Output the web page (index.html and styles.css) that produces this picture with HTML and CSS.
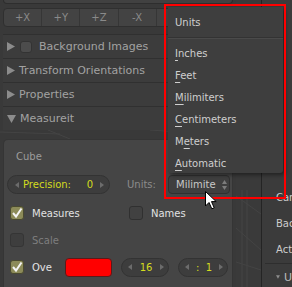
FILE: index.html
```html
<!DOCTYPE html>
<html>
<head>
<meta charset="utf-8">
<title>Measureit</title>
<link rel="stylesheet" href="styles.css">
</head>
<body>
<div class="screen">

  <!-- tool shelf -->
  <div class="shelf">
    <div class="stub"></div>
    <div class="axes">
      <span>+X</span><span>+Y</span><span>+Z</span><span>-X</span><span></span><span></span>
    </div>

    <div class="hdr first">
      <svg class="tri" width="8" height="9" viewBox="0 0 8 9"><polygon points="0,0 8,4.5 0,9"/></svg>
      <span class="chk"></span>
      <span>Background Images</span>
    </div>
    <div class="hdr">
      <svg class="tri" width="8" height="9" viewBox="0 0 8 9"><polygon points="0,0 8,4.5 0,9"/></svg>
      <span>Transform Orientations</span>
    </div>
    <div class="hdr">
      <svg class="tri" width="8" height="9" viewBox="0 0 8 9"><polygon points="0,0 8,4.5 0,9"/></svg>
      <span>Properties</span>
    </div>
    <div class="hdr">
      <svg class="tri" width="9" height="8" viewBox="0 0 9 8"><polygon points="0,0 9,0 4.5,8"/></svg>
      <span>Measureit</span>
    </div>

    <div class="gap">
      <svg width="236" height="9" viewBox="0 0 236 9">
        <line x1="0" y1="2" x2="60" y2="4" />
        <line x1="48" y1="0" x2="70" y2="9" />
        <line x1="150" y1="0" x2="236" y2="6" />
      </svg>
    </div>

    <div class="box">
      <div class="obj">Cube</div>

      <div class="line">
        <div class="num prec">
          <svg class="arr" width="4" height="6" viewBox="0 0 4 6"><polygon points="4,0 0,3 4,6"/></svg>
          <span class="lbl">Precision:</span>
          <span class="val">0</span>
          <svg class="arr" width="4" height="6" viewBox="0 0 4 6"><polygon points="0,0 4,3 0,6"/></svg>
        </div>
        <span class="units">Units:</span>
        <div class="drop">
          <span class="dtext">Milimite</span>
          <svg width="5" height="10" viewBox="0 0 5 10"><polygon points="0,4 2.5,0 5,4"/><polygon points="0,6 5,6 2.5,10"/></svg>
        </div>
      </div>

      <div class="opt top">
        <div class="col">
          <span class="chk on"><svg width="14" height="14" viewBox="0 0 14 14"><polyline points="3,7 6,10.5 11.5,2.5"/></svg></span>
          <span class="txt">Measures</span>
        </div>
        <div class="col">
          <span class="chk"></span>
          <span class="txt">Names</span>
        </div>
      </div>

      <div class="opt">
        <div class="col">
          <span class="chk dim"></span>
          <span class="txt off">Scale</span>
        </div>
      </div>

      <div class="opt">
        <div class="col short">
          <span class="chk on"><svg width="14" height="14" viewBox="0 0 14 14"><polyline points="3,7 6,10.5 11.5,2.5"/></svg></span>
          <span class="txt">Ove</span>
        </div>
        <div class="swatch"></div>
        <div class="num small">
          <svg class="arr" width="4" height="6" viewBox="0 0 4 6"><polygon points="4,0 0,3 4,6"/></svg>
          <span class="val">16</span>
          <svg class="arr" width="4" height="6" viewBox="0 0 4 6"><polygon points="0,0 4,3 0,6"/></svg>
        </div>
        <div class="num small ratio">
          <svg class="arr" width="4" height="6" viewBox="0 0 4 6"><polygon points="4,0 0,3 4,6"/></svg>
          <span class="val">:&nbsp;&nbsp;1</span>
          <svg class="arr" width="4" height="6" viewBox="0 0 4 6"><polygon points="0,0 4,3 0,6"/></svg>
        </div>
      </div>
    </div>
  </div>

  <!-- 3d viewport strip -->
  <div class="view">
    <svg width="25" height="287" viewBox="0 0 25 287">
      <line x1="6" y1="190" x2="6" y2="287" />
      <line x1="11" y1="190" x2="11" y2="287" />
      <line x1="0" y1="196" x2="25" y2="214" />
      <line x1="0" y1="228" x2="25" y2="250" />
      <line x1="0" y1="262" x2="25" y2="270" />
    </svg>
  </div>

  <!-- properties region -->
  <div class="side">
    <div class="sidetop"></div>
    <div class="srow">Cam</div>
    <div class="srow">Bac</div>
    <div class="srow">Act</div>
    <div class="shdr">
      <svg class="tri" width="9" height="8" viewBox="0 0 9 8"><polygon points="0,0 9,0 4.5,8"/></svg>
      <span>U</span>
    </div>
  </div>

  <!-- popup menu -->
  <div class="menu">
    <div class="mtitle">Units</div>
    <div class="msep"></div>
    <div class="mitem"><u>I</u>nches</div>
    <div class="mitem"><u>F</u>eet</div>
    <div class="mitem"><u>M</u>ilimiters</div>
    <div class="mitem"><u>C</u>entimeters</div>
    <div class="mitem">M<u>e</u>ters</div>
    <div class="mitem"><u>A</u>utomatic</div>
  </div>
  <div class="mark"></div>

  <svg class="cursor" width="13" height="19" viewBox="0 0 13 19">
    <polygon points="0.5,0.5 0.5,15 4,11.5 6.8,17.8 9.2,16.8 6.5,10.6 11.2,10.6" />
  </svg>
</div>
</body>
</html>
```

FILE: styles.css
```css
body {
  margin: 0;
  background: #393939;
  font-family: "DejaVu Sans", sans-serif;
  font-size: 10px;
  color: #c8c8c8;
  overflow: hidden;
}

.screen {
  position: relative;
  display: flex;
  width: 292px;
  height: 287px;
  overflow: hidden;
}

/* left tool shelf */
.shelf {
  width: 236px;
  flex: none;
  display: flex;
  flex-direction: column;
}

.stub {
  height: 3px;
  width: 228px;
  margin: 0 3px;
  background: #414141;
  border: 1px solid #2e2e2e;
  border-top: 0;
  border-radius: 0 0 5px 5px;
}

.axes {
  display: flex;
  width: 230px;
  height: 19px;
  margin: 4px 3px 0;
  box-sizing: border-box;
  border: 1px solid #2f2f2f;
  border-radius: 4px;
  background: #434343;
  overflow: hidden;
}
.axes span {
  flex: 1;
  display: flex;
  align-items: center;
  justify-content: center;
  color: #8a8a8a;
  border-left: 1px solid #363636;
}
.axes span:first-child { border-left: 0; }

.hdr {
  display: flex;
  align-items: center;
  gap: 4px;
  height: 23px;
  margin: 0 3px;
  width: 230px;
  border-top: 1px solid #303030;
  padding-left: 4px;
  box-sizing: content-box;
  font-size: 11px;
  color: #a2a2a2;
  background: #3c3c3c;
}
.hdr.first { margin-top: 7px; }
.hdr .tri { fill: #8c8c8c; }
.hdr .chk { width: 12px; height: 12px; margin: 0 3px 0 1px; background: #4c4c4c; border-color: #333; border-radius: 3px; }

.gap { height: 9px; }
.gap svg line, .view svg line { stroke: #444; stroke-width: 1; }

.box {
  margin-left: 3px;
  width: 230px;
  box-sizing: border-box;
  flex: 1;
  background: #454545;
  border: 1px solid #353535;
  border-bottom: 0;
  border-radius: 5px 5px 0 0;
  padding: 7px 3px 0 3px;
}

.obj {
  height: 20px;
  line-height: 20px;
  padding-left: 9px;
  color: #9c9c9c;
}

.line {
  display: flex;
  align-items: center;
  margin-top: 8px;
  height: 19px;
}

.num {
  display: flex;
  align-items: center;
  flex: none;
  height: 19px;
  box-sizing: border-box;
  background: #3d3d3d;
  border: 1px solid #333;
  border-radius: 10px;
  padding: 0 5px 0 7px;
  color: #d4dc1e;
}
.num .arr { fill: #6c6c6c; flex: none; }
.num .lbl { margin-left: 4px; flex: 1; }
.num .val { margin-right: 7px; }
.prec { width: 103px; }

.units {
  flex: none;
  margin-left: 17px;
  width: 41px;
  color: #8c8c8c;
}

.drop {
  display: flex;
  align-items: center;
  flex: none;
  width: 62px;
  height: 19px;
  box-sizing: border-box;
  background: #3f3f3f;
  border: 1px solid #303030;
  border-radius: 4px;
  padding: 0 2px 0 7px;
  color: #c9c9c9;
}
.drop .dtext { flex: 1; overflow: hidden; white-space: nowrap; }
.drop svg { fill: #7c7c7c; flex: none; }

.opt {
  display: flex;
  align-items: center;
  height: 20px;
  margin-top: 7px;
}
.opt.top { margin-top: 9px; }
.col {
  display: flex;
  align-items: center;
  flex: none;
  width: 116px;
  padding-left: 3px;
}
.col.short { width: 55px; }

.chk {
  width: 14px;
  height: 14px;
  box-sizing: border-box;
  background: #414141;
  border: 1px solid #303030;
  border-radius: 3px;
  flex: none;
}
.chk.dim { background: #3e3e3e; border-color: #353535; }
.chk.on { background: #8c8b59; border-color: #4a4a30; }
.chk svg { display: block; margin: -1px; }
.chk polyline { fill: none; stroke: #f4f4f4; stroke-width: 2; }

.txt { margin-left: 8px; color: #e2e2e2; }
.txt.off { color: #7e7e7e; }

.swatch {
  flex: none;
  width: 47px;
  height: 19px;
  box-sizing: border-box;
  background: #ff0000;
  border: 1px solid #5a1a1a;
  border-radius: 4px;
}

.num.small {
  width: 48px;
  margin-left: 9px;
  justify-content: space-between;
  padding: 0 4px 0 6px;
}
.num.small .val { margin: 0; }
.num.ratio { width: 50px; }

/* viewport between regions */
.view {
  width: 25px;
  flex: none;
  background: #3a3a3a;
  border-right: 1px solid #242424;
}
.view svg { display: block; }

/* right properties region */
.side {
  flex: 1;
  background: #3b3b3b;
  padding-left: 14px;
  color: #cdcdcd;
  white-space: nowrap;
  overflow: hidden;
}
.sidetop { height: 185px; }
.srow { height: 26px; line-height: 26px; }
.shdr {
  display: flex;
  align-items: center;
  gap: 4px;
  height: 26px;
  margin-left: -11px;
  padding-left: 11px;
  border-top: 1px solid #2e2e2e;
  font-size: 11px;
  color: #bcbcbc;
}
.shdr .tri { fill: #8c8c8c; }

/* popup menu */
.menu {
  position: absolute;
  left: 168px;
  top: 7px;
  width: 115px;
  height: 166px;
  box-sizing: border-box;
  background: #3e3e3e;
  border-radius: 0 0 3px 3px;
  box-shadow: 2px 2px 4px rgba(0, 0, 0, 0.45);
  padding-top: 5px;
  color: #cfcfcf;
}
.mtitle { height: 22px; line-height: 22px; padding-left: 7px; }
.msep { height: 1px; margin: 3px 0 4px; background: #4a4a4a; border-top: 1px solid #333; }
.mitem { height: 22px; line-height: 22px; padding-left: 7px; }
.mitem u { text-decoration-thickness: 1px; text-underline-offset: 3px; }

.mark {
  position: absolute;
  left: 164px;
  top: 4px;
  width: 122px;
  height: 195px;
  box-sizing: border-box;
  border: 2px solid #ff0000;
}

.cursor {
  position: absolute;
  left: 205px;
  top: 191px;
}
.cursor polygon { fill: #ffffff; stroke: #000000; stroke-width: 1; }
```
